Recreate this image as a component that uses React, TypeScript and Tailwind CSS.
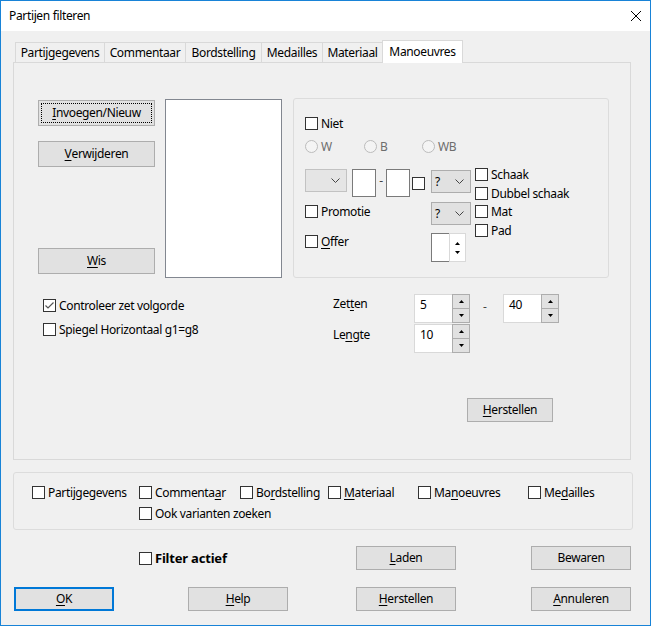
import React from 'react';

const cn = (...c: (string | false | undefined)[]) => c.filter(Boolean).join(' ');

function Acc({ t, u }: { t: string; u?: number }) {
  if (u === undefined) return <>{t}</>;
  return (
    <>
      {t.slice(0, u)}
      <span className="underline decoration-1 underline-offset-[2px]">{t[u]}</span>
      {t.slice(u + 1)}
    </>
  );
}

function Box({ checked }: { checked?: boolean }) {
  return (
    <span className="w-[13px] h-[13px] shrink-0 border border-[#333333] bg-white flex items-center justify-center">
      {checked && (
        <svg width="11" height="11" viewBox="0 0 11 11">
          <path d="M1.5 5.5 L4 8 L9.5 2.5" fill="none" stroke="#555" strokeWidth="1.2" />
        </svg>
      )}
    </span>
  );
}

function Check({
  t,
  u,
  checked,
  bold,
  className,
}: {
  t: string;
  u?: number;
  checked?: boolean;
  bold?: boolean;
  className?: string;
}) {
  return (
    <div className={cn('flex items-center gap-[3px] h-[13px]', className)}>
      <Box checked={checked} />
      <span className={cn('whitespace-nowrap', bold && 'font-bold text-[13px] tracking-[-0.2px]')}>
        <Acc t={t} u={u} />
      </span>
    </div>
  );
}

function Radio({ t, className }: { t: string; className?: string }) {
  return (
    <div className={cn('flex items-center gap-[3px] h-[13px] text-[#6d6d6d]', className)}>
      <span className="w-[13px] h-[13px] shrink-0 rounded-full border border-[#bcbcbc] bg-[#f4f4f4]" />
      <span>{t}</span>
    </div>
  );
}

function Btn({
  children,
  className,
  focus,
  def,
}: {
  children: React.ReactNode;
  className?: string;
  focus?: boolean;
  def?: boolean;
}) {
  return (
    <div
      className={cn(
        'bg-[#e1e1e1] flex items-center justify-center whitespace-nowrap',
        def ? 'border-2 border-[#0078d7]' : 'border border-[#adadad]',
        focus && 'p-[2px]',
        className
      )}
    >
      {focus ? (
        <div className="w-full h-full border border-dotted border-black flex items-center justify-center">
          {children}
        </div>
      ) : (
        children
      )}
    </div>
  );
}

const Chevron = () => (
  <svg width="9" height="5" viewBox="0 0 9 5">
    <path d="M0.5 0.5 L4.5 4.5 L8.5 0.5" fill="none" stroke="#444" />
  </svg>
);

function Combo({ v, disabled, className }: { v?: string; disabled?: boolean; className?: string }) {
  return (
    <div
      className={cn(
        'h-[23px] border flex items-center justify-between pl-[3px] pr-[6px]',
        disabled ? 'bg-[#e5e5e5] border-[#c2c2c2]' : 'bg-[#e1e1e1] border-[#adadad]',
        className
      )}
    >
      <span>{v}</span>
      <Chevron />
    </div>
  );
}

const Up = () => (
  <svg width="5" height="3" viewBox="0 0 5 3">
    <path d="M0 3 L2.5 0 L5 3Z" fill="#000" />
  </svg>
);
const Down = () => (
  <svg width="5" height="3" viewBox="0 0 5 3">
    <path d="M0 0 L2.5 3 L5 0Z" fill="#000" />
  </svg>
);

function Spin({ v }: { v: string }) {
  return (
    <div className="flex w-[56px] h-[29px]">
      <div className="flex-1 bg-white border border-r-0 border-[#d9d9d9] pl-[5px] pt-[2px]">{v}</div>
      <div className="w-[18px] flex flex-col border border-[#adadad]">
        <div className="flex-1 bg-[#e1e1e1] border-b border-[#adadad] flex items-center justify-center">
          <Up />
        </div>
        <div className="flex-1 bg-[#e1e1e1] flex items-center justify-center">
          <Down />
        </div>
      </div>
    </div>
  );
}

const tabs = [
  { t: 'Partijgegevens', w: 'w-[89px]' },
  { t: 'Commentaar', w: 'w-[81px]' },
  { t: 'Bordstelling', w: 'w-[76px]' },
  { t: 'Medailles', w: 'w-[61px]' },
  { t: 'Materiaal', w: 'w-[60px]' },
];

export default function App() {
  return (
    <div className="w-[651px] h-[626px] border border-[#1883d7] bg-[#f0f0f0] flex flex-col font-['Noto_Sans',sans-serif] text-[12px] leading-[16px] tracking-[-0.35px] text-black overflow-hidden">
      {/* title bar */}
      <div className="h-[30px] shrink-0 bg-white flex items-center justify-between pl-[8px] pr-[9px]">
        <span>Partijen filteren</span>
        <svg width="10" height="10" viewBox="0 0 10 10">
          <path d="M0 0L10 10M10 0L0 10" stroke="#000" strokeWidth="1" />
        </svg>
      </div>

      <div className="pl-[12px] pt-[9px]">
        {/* tabs */}
        <div className="flex items-end h-[22px] pl-[2px]">
          {tabs.map((tab) => (
            <div
              key={tab.t}
              className={cn(
                'h-[20px] border-l border-t border-[#d9d9d9] flex items-center justify-center whitespace-nowrap pt-[1px]',
                tab.w
              )}
            >
              {tab.t}
            </div>
          ))}
          <div className="relative z-10 -mb-px w-[81px] h-[23px] bg-white border-l border-t border-r border-[#d9d9d9] flex items-center justify-center pb-[1px]">
            Manoeuvres
          </div>
        </div>

        {/* tab panel */}
        <div className="w-[618px] h-[398px] border border-[#d9d9d9] flex flex-col">
          <div className="flex items-start mt-[35px]">
            <div className="ml-[24px] w-[117px] flex flex-col">
              <Btn focus className="mt-[2px] h-[26px]">
                <Acc t="Invoegen/Nieuw" u={0} />
              </Btn>
              <Btn className="mt-[15px] h-[26px]">
                <Acc t="Verwijderen" u={0} />
              </Btn>
              <Btn className="mt-[81px] h-[26px]">
                <Acc t="Wis" u={0} />
              </Btn>
            </div>
            <div className="ml-[10px] mt-[1px] w-[117px] h-[179px] bg-white border border-[#828790]" />

            {/* group */}
            <div className="ml-[11px] w-[316px] h-[180px] border border-[#dcdcdc] rounded-[3px] pl-[11px] pt-[18px]">
              <Check t="Niet" />
              <div className="flex mt-[10px]">
                <Radio t="W" className="w-[59px]" />
                <Radio t="B" className="w-[58px]" />
                <Radio t="WB" />
              </div>
              <div className="flex items-start mt-[15px]">
                <div className="flex flex-col">
                  <div className="flex items-start mt-[1px]">
                    <Combo disabled className="w-[42px]" />
                    <div className="ml-[5px] w-[24px] h-[28px] bg-white border border-[#7a7a7a]" />
                    <div className="w-[10px] text-center text-[#444] pt-[4px]">-</div>
                    <div className="w-[24px] h-[28px] bg-white border border-[#7a7a7a]" />
                    <div className="ml-[2px] mt-[8px]">
                      <Box />
                    </div>
                    <Combo v="?" className="ml-[6px] mt-[1px] w-[40px]" />
                  </div>
                  <div className="flex items-start mt-[5px]">
                    <Check t="Promotie" className="w-[126px] mt-[3px]" />
                    <Combo v="?" className="w-[40px]" />
                  </div>
                  <div className="flex items-start mt-[8px]">
                    <Check t="Offer" u={0} className="w-[126px] mt-[2px]" />
                    <div className="flex w-[35px] h-[29px]">
                      <div className="w-[18px] bg-white border border-r-0 border-[#7a7a7a]" />
                      <div className="w-[17px] bg-white border border-[#d9d9d9] flex flex-col items-center justify-center gap-[6px]">
                        <Up />
                        <Down />
                      </div>
                    </div>
                  </div>
                </div>
                <div className="ml-[4px] flex flex-col">
                  <Check t="Schaak" />
                  <Check t="Dubbel schaak" className="mt-[6px]" />
                  <Check t="Mat" className="mt-[5px]" />
                  <Check t="Pad" className="mt-[6px]" />
                </div>
              </div>
            </div>
          </div>

          {/* zetten row */}
          <div className="flex items-start mt-[16px]">
            <div className="ml-[29px] w-[290px] flex flex-col pt-[5px]">
              <Check t="Controleer zet volgorde" checked />
              <Check t="Spiegel Horizontaal g1=g8" className="mt-[11px]" />
            </div>
            <div className="flex flex-col">
              <div className="flex items-start">
                <div className="w-[81px] pt-[2px]">
                  <Acc t="Zetten" u={3} />
                </div>
                <Spin v="5" />
                <div className="w-[33px] pl-[13px] pt-[5px] text-[#444]">-</div>
                <Spin v="40" />
              </div>
              <div className="flex items-start mt-[1px]">
                <div className="w-[81px] pt-[3px]">
                  <Acc t="Lengte" u={2} />
                </div>
                <Spin v="10" />
              </div>
              <Btn className="ml-[134px] mt-[45px] w-[86px] h-[24px]">
                <Acc t="Herstellen" u={0} />
              </Btn>
            </div>
          </div>
        </div>

        {/* bottom group */}
        <div className="mt-[12px] w-[620px] h-[58px] border border-[#dcdcdc] rounded-[3px] pl-[18px] pt-[13px]">
          <div className="flex">
            <Check t="Partijgegevens" className="w-[107px]" />
            <Check t="Commentaar" u={8} className="w-[101px]" />
            <Check t="Bordstelling" u={2} className="w-[88px]" />
            <Check t="Materiaal" u={0} className="w-[90px]" />
            <Check t="Manoeuvres" u={2} className="w-[110px]" />
            <Check t="Medailles" u={2} />
          </div>
          <Check t="Ook varianten zoeken" className="ml-[107px] mt-[8px]" />
        </div>

        <div className="flex items-center mt-[16px] h-[24px]">
          <Check t="Filter actief" bold className="ml-[126px] w-[217px]" />
          <Btn className="w-[100px] h-[24px]">
            <Acc t="Laden" u={0} />
          </Btn>
          <Btn className="ml-[75px] w-[100px] h-[24px]">Bewaren</Btn>
        </div>

        <div className="flex items-center mt-[17px]">
          <Btn def className="ml-[1px] w-[100px] h-[24px]">
            <Acc t="OK" u={0} />
          </Btn>
          <Btn className="ml-[74px] w-[100px] h-[24px]">
            <Acc t="Help" u={0} />
          </Btn>
          <Btn className="ml-[68px] w-[100px] h-[24px]">
            <Acc t="Herstellen" u={0} />
          </Btn>
          <Btn className="ml-[75px] w-[100px] h-[24px]">
            <Acc t="Annuleren" u={0} />
          </Btn>
        </div>
      </div>
    </div>
  );
}
